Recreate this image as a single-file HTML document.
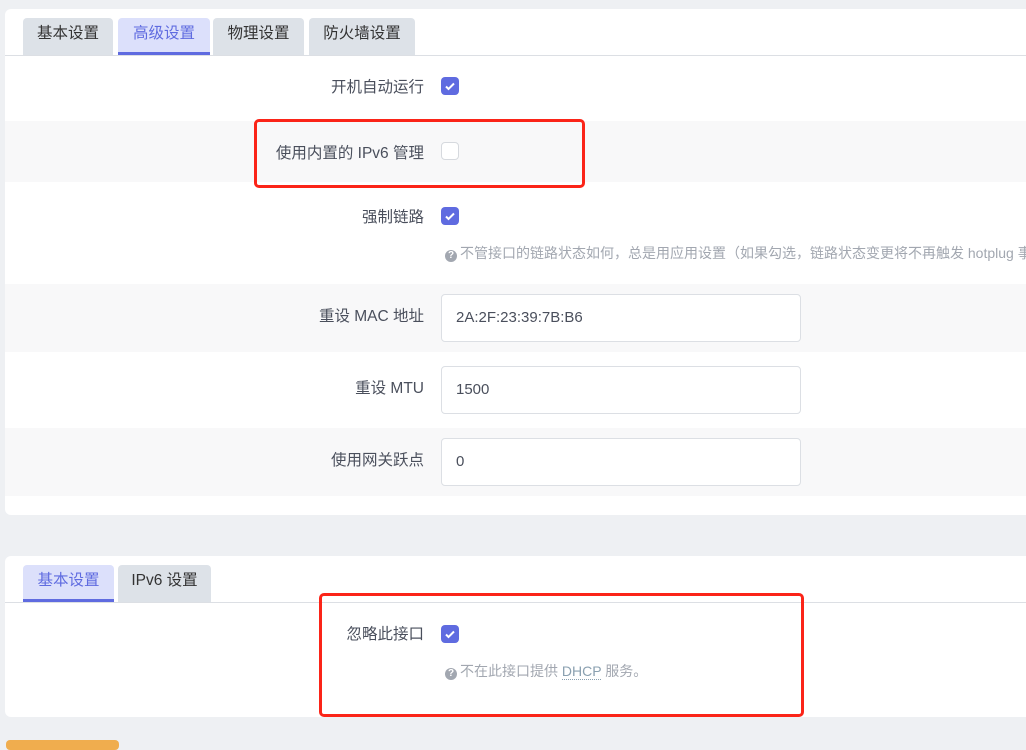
<!DOCTYPE html>
<html><head><meta charset="utf-8"><style>
*{box-sizing:border-box;margin:0;padding:0}
body{width:1026px;height:746px;overflow:hidden;background:#eef0f3;font-family:"Liberation Sans","Noto Sans CJK SC",sans-serif;font-size:14px;color:#4a4f5c;position:relative}
.a{position:absolute}
.card{position:absolute;left:5px;right:-10px;background:#fff;border-radius:6px;overflow:hidden}
.tab{position:absolute;height:37px;background:#dde2e8;border-radius:4px 4px 0 0;font-size:15.5px;color:#333;text-align:center;line-height:32px}
.tab.on{background:#dce0fb;color:#5f6be0;border-bottom:3px solid #5f6be0}
.line{position:absolute;left:0;right:0;height:1px;background:#dcdfe4}
.row{position:absolute;left:0;right:0}
.g{background:#f8f8f9}
.lbl{position:absolute;right:0;width:420px;text-align:right;font-size:15.5px;color:#4a4f5c}
.cb{position:absolute;left:436px;width:18px;height:18px;border-radius:4px;background:#5f6be0}
.cb svg{position:absolute;left:3px;top:3px}
.cb.off{background:#fff;border:1px solid #d6d9de}
.inp{position:absolute;left:436px;width:360px;height:48px;border:1px solid #dcdfe4;border-radius:4px;background:#fff;font-size:15px;padding:0 14px;line-height:46px;color:#4a4f5c}
.help{position:absolute;font-size:14px;color:#a2a7b0;white-space:nowrap}
.q{display:inline-block;width:12px;height:12px;border-radius:50%;background:#a2a7b0;color:#fff;font-size:10px;line-height:12px;text-align:center;font-weight:bold;margin-right:3px;vertical-align:0}
.red{position:absolute;border:3px solid #fb2418;border-radius:5px}
</style></head><body>
<div class="card" style="top:9px;height:506px">
 <div class="tab" style="left:18px;top:9px;width:90px">基本设置</div>
 <div class="tab on" style="left:113px;top:9px;width:92px">高级设置</div>
 <div class="tab" style="left:208px;top:9px;width:91px">物理设置</div>
 <div class="tab" style="left:304px;top:9px;width:106px">防火墙设置</div>
 <div class="line" style="top:46px"></div>
 <div class="row" style="top:47px;height:65px">
  <div class="lbl" style="left:0;width:419px;top:19px">开机自动运行</div>
  <div class="cb" style="top:21px"><svg width="12" height="12" viewBox="0 0 12 12"><path d="M2 6.5l2.5 2.5L10 3.5" stroke="#fff" stroke-width="2" fill="none"/></svg></div>
 </div>
 <div class="row g" style="top:112px;height:61px">
  <div class="lbl" style="left:0;width:419px;top:20px">使用内置的 IPv6 管理</div>
  <div class="cb off" style="top:21px"></div>
 </div>
 <div class="row" style="top:173px;height:102px">
  <div class="lbl" style="left:0;width:419px;top:23px">强制链路</div>
  <div class="cb" style="top:25px"><svg width="12" height="12" viewBox="0 0 12 12"><path d="M2 6.5l2.5 2.5L10 3.5" stroke="#fff" stroke-width="2" fill="none"/></svg></div>
  <div class="help" style="left:440px;top:61px"><span class="q">?</span>不管接口的链路状态如何，总是用应用设置（如果勾选，链路状态变更将不再触发 hotplug 事件处理）</div>
 </div>
 <div class="row g" style="top:275px;height:68px">
  <div class="lbl" style="left:0;width:419px;top:20px">重设 MAC 地址</div>
  <div class="inp" style="top:10px">2A:2F:23:39:7B:B6</div>
 </div>
 <div class="row" style="top:343px;height:76px">
  <div class="lbl" style="left:0;width:419px;top:24px">重设 MTU</div>
  <div class="inp" style="top:14px">1500</div>
 </div>
 <div class="row g" style="top:419px;height:68px">
  <div class="lbl" style="left:0;width:419px;top:20px">使用网关跃点</div>
  <div class="inp" style="top:10px">0</div>
 </div>
</div>
<div class="red" style="left:254px;top:119px;width:331px;height:69px"></div>

<div class="card" style="top:556px;height:161px">
 <div class="tab on" style="left:18px;top:9px;width:91px;height:37px">基本设置</div>
 <div class="tab" style="left:113px;top:9px;width:93px">IPv6 设置</div>
 <div class="line" style="top:46px"></div>
 <div class="lbl" style="left:0;width:419px;top:66px">忽略此接口</div>
 <div class="cb" style="top:69px"><svg width="12" height="12" viewBox="0 0 12 12"><path d="M2 6.5l2.5 2.5L10 3.5" stroke="#fff" stroke-width="2" fill="none"/></svg></div>
 <div class="help" style="left:440px;top:105px"><span class="q">?</span>不在此接口提供 <span style="color:#8aa0b0;border-bottom:1px dotted #8aa0b0">DHCP</span> 服务。</div>
</div>
<div class="red" style="left:319px;top:593px;width:485px;height:124px"></div>
<div class="a" style="left:6px;top:740px;width:113px;height:10px;background:#f0ad4e;border-radius:4px"></div>
</body></html>
